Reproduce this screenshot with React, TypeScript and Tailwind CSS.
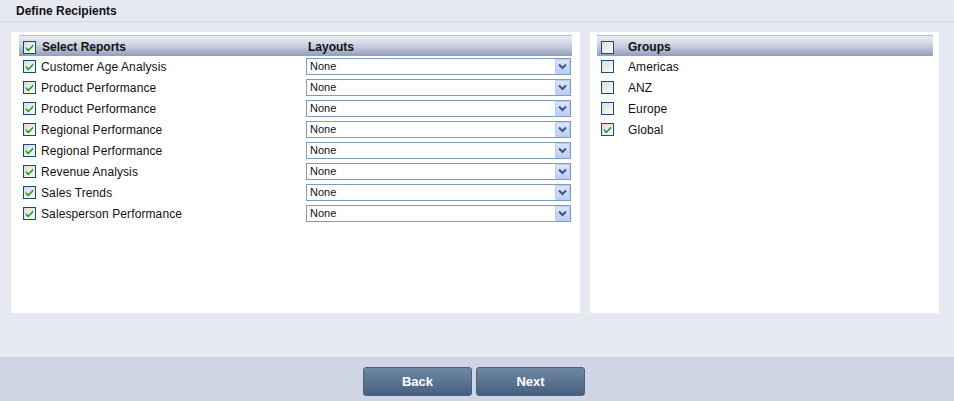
import React from "react";

const reports = [
  "Customer Age Analysis",
  "Product Performance",
  "Product Performance",
  "Regional Performance",
  "Regional Performance",
  "Revenue Analysis",
  "Sales Trends",
  "Salesperson Performance",
];

const groups = [
  { name: "Americas", checked: false },
  { name: "ANZ", checked: false },
  { name: "Europe", checked: false },
  { name: "Global", checked: true },
];

function Check({ checked }: { checked: boolean }) {
  return (
    <div className="w-[13px] h-[13px] shrink-0 border border-[#1c4a78] bg-gradient-to-br from-[#dcdcd7] to-[#fbfbf9] flex items-center justify-center">
      {checked && (
        <svg width="9" height="9" viewBox="0 0 9 9">
          <path d="M0.8 3.8 L3.3 6.2 L8.2 1.2 L8.2 3.6 L3.3 8.5 L0.8 6.1 Z" fill="#1f9e1f" />
        </svg>
      )}
    </div>
  );
}

function Dropdown() {
  return (
    <div className="w-[265px] h-[17px] border border-[#7f9db9] bg-white flex items-center justify-between">
      <span className="pl-[3px] text-[11px] text-[#111] leading-none">None</span>
      <div className="w-[15px] h-[15px] border border-[#bccbf0] bg-gradient-to-b from-[#dbe5fd] to-[#bacefa] flex items-center justify-center rounded-[1px]">
        <svg width="9" height="7" viewBox="0 0 9 7">
          <path d="M1 1.5 L4.5 5 L8 1.5" stroke="#41557a" strokeWidth="2" fill="none" />
        </svg>
      </div>
    </div>
  );
}

export default function App() {
  return (
    <div
      className="w-[954px] h-[401px] bg-[#e6e8f2] flex flex-col text-[#111]"
      style={{ fontFamily: '"Liberation Sans", Arial, sans-serif' }}
    >
      <div className="h-[22px] border-b border-[#d3d7e2] pl-[16px] flex items-center">
        <span className="text-[12px] font-bold text-[#111]">Define Recipients</span>
      </div>

      <div className="flex gap-[10px] pl-[11px] pt-[10px]">
        <div className="w-[569px] h-[281px] bg-white px-[8px] pt-[3px]">
          <div className="h-[21px] flex items-center border-t border-[#b4bcd4] bg-gradient-to-b from-[#eceef5] via-[#c9cedf] to-[#929cbb]">
            <div className="w-[287px] flex items-center pl-[4px] pt-[2px]">
              <Check checked />
              <span className="ml-[6px] text-[12px] font-bold">Select Reports</span>
            </div>
            <span className="text-[12px] font-bold ml-[2px] pt-[1px]">Layouts</span>
          </div>
          {reports.map((r, i) => (
            <div key={i} className="h-[21px] flex items-center">
              <div className="w-[287px] flex items-center pl-[4px]">
                <Check checked />
                <span className="ml-[5px] text-[12px] tracking-[0.1px]">{r}</span>
              </div>
              <Dropdown />
            </div>
          ))}
        </div>

        <div className="w-[349px] h-[281px] bg-white pl-[7px] pr-[6px] pt-[3px]">
          <div className="h-[21px] flex items-center border-t border-[#b4bcd4] bg-gradient-to-b from-[#eceef5] via-[#c9cedf] to-[#929cbb] pl-[4px]">
            <div className="pt-[2px]">
              <Check checked={false} />
            </div>
            <span className="ml-[14px] text-[12px] font-bold pt-[1px]">Groups</span>
          </div>
          {groups.map((g) => (
            <div key={g.name} className="h-[21px] flex items-center pl-[4px]">
              <Check checked={g.checked} />
              <span className="ml-[14px] text-[12px] tracking-[0.1px]">{g.name}</span>
            </div>
          ))}
        </div>
      </div>

      <div className="flex-1" />

      <div className="h-[44px] bg-[#d0d5e5] flex justify-center pt-[10px] gap-[4px] pr-[6px]">
        <button className="w-[109px] h-[29px] rounded-[3px] border border-[#4b6180] bg-gradient-to-b from-[#6e88a6] to-[#48607f] text-white text-[13px] font-bold">
          Back
        </button>
        <button className="w-[109px] h-[29px] rounded-[3px] border border-[#4b6180] bg-gradient-to-b from-[#6e88a6] to-[#48607f] text-white text-[13px] font-bold">
          Next
        </button>
      </div>
    </div>
  );
}
